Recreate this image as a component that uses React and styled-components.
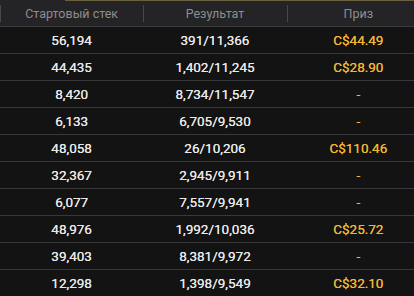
import React from 'react'
import styled, { createGlobalStyle } from 'styled-components'

const Global = createGlobalStyle`
    html, body {
        margin: 0;
        padding: 0;
        background: #131313;
        overflow: hidden;
    }
    body {
        font-family: Roboto, 'Liberation Sans', sans-serif;
    }
`

const Wrap = styled.div`
    width: 414px;
    height: 296px;
    overflow: hidden;
    background: #131313;
`

const Table = styled.div`
    width: 430px;
`

const Head = styled.div`
    display: grid;
    grid-template-columns: repeat(3, 1fr);
    height: 25px;
    background: #242427;
    border-top: 1px solid #242427;
    border-bottom: 1px solid #3c3c3e;
    position: relative;
    &::before {
        content: '';
        position: absolute;
        top: -1px;
        left: 65px;
        right: 0;
        height: 1px;
        background: #6a5f3f;
    }
`

const HeadCell = styled.div`
    position: relative;
    display: flex;
    align-items: center;
    justify-content: center;
    color: #8d8d90;
    font-size: 12.5px;
    &::before {
        content: '';
        position: absolute;
        left: 0;
        top: 4px;
        bottom: 4px;
        width: 1px;
        background: #48484a;
    }
`

const Row = styled.div`
    display: grid;
    grid-template-columns: repeat(3, 1fr);
    height: 26px;
    border-bottom: 1px solid #38383a;
`

const Cell = styled.div`
    display: flex;
    align-items: center;
    justify-content: center;
    font-size: 13.5px;
    color: ${p => (p.$gold ? '#f2b433' : '#e8e8e8')};
    text-shadow: 0 0 0.4px currentColor;
`

const rows = [
    ['56,194', '391/11,366', 'C$44.49'],
    ['44,435', '1,402/11,245', 'C$28.90'],
    ['8,420', '8,734/11,547', '-'],
    ['6,133', '6,705/9,530', '-'],
    ['48,058', '26/10,206', 'C$110.46'],
    ['32,367', '2,945/9,911', '-'],
    ['6,077', '7,557/9,941', '-'],
    ['48,976', '1,992/10,036', 'C$25.72'],
    ['39,403', '8,381/9,972', '-'],
    ['12,298', '1,398/9,549', 'C$32.10'],
]

const App = () => {
    return (
        <Wrap>
            <Global />
            <Table>
                <Head>
                    <HeadCell>Стартовый стек</HeadCell>
                    <HeadCell>Результат</HeadCell>
                    <HeadCell>Приз</HeadCell>
                </Head>
                {rows.map((r, i) => (
                    <Row key={i}>
                        <Cell>{r[0]}</Cell>
                        <Cell>{r[1]}</Cell>
                        <Cell $gold>{r[2]}</Cell>
                    </Row>
                ))}
            </Table>
        </Wrap>
    )
}

export default App
